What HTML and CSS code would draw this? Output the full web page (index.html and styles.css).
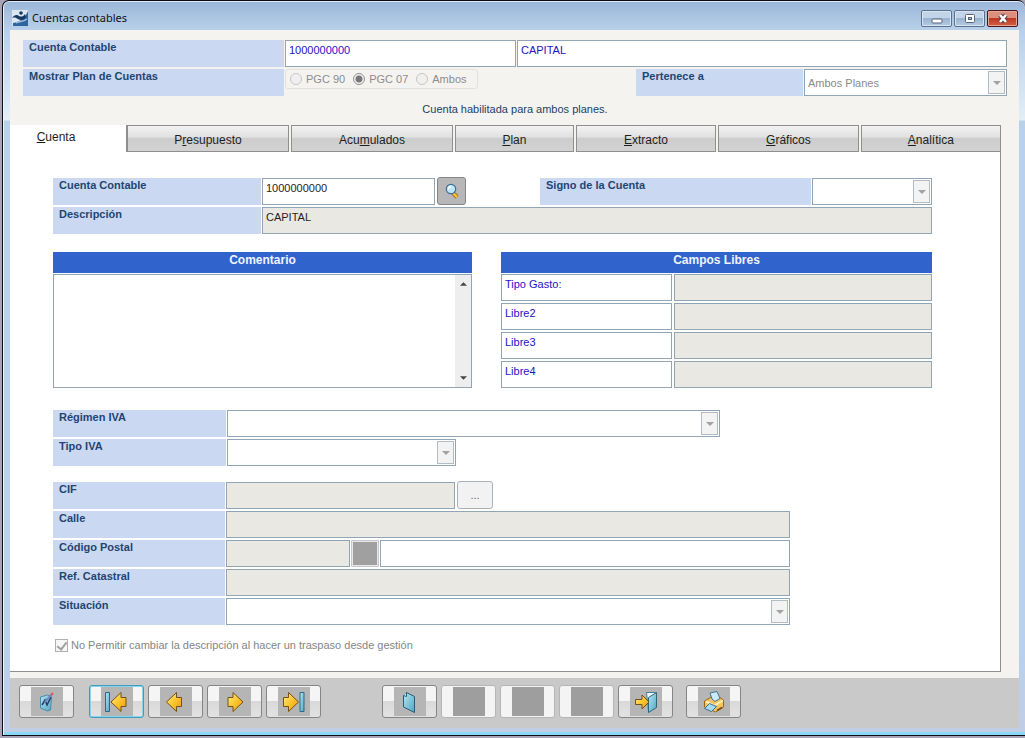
FILE: index.html
```html
<!DOCTYPE html>
<html lang="es">
<head>
<meta charset="utf-8">
<title>Cuentas contables</title>
<link rel="stylesheet" href="styles.css">
</head>
<body>
<svg class="defs" aria-hidden="true">
  <defs>
    <linearGradient id="gold" x1="0" y1="0" x2="1" y2="1">
      <stop offset="0" stop-color="#fff08a"/><stop offset="0.5" stop-color="#fcc52c"/><stop offset="1" stop-color="#e69a12"/>
    </linearGradient>
    <linearGradient id="aqua" x1="0" y1="0" x2="1" y2="1">
      <stop offset="0" stop-color="#b5e6f3"/><stop offset="1" stop-color="#4fa5c4"/>
    </linearGradient>
    <symbol id="drop" viewBox="0 0 8 4"><path d="M0 0h8L4 4z" fill="#a2a2a2"/></symbol>
  </defs>
</svg>
<div class="window">
  <header class="titlebar">
    <svg class="app-icon" viewBox="0 0 16 16"><path d="M0 0h16v16H0z" fill="#dbe6f1"/><path d="M16 1v15H1v-3C8 12 13 8 16 1z" fill="#2f659c"/><path d="M0 8c2-3 5-4 7-2 2 1 4 1 6-2l1 3c-2 3-5 4-8 2C4 8 3 7 0 8z" fill="#15395f"/><circle cx="9" cy="3" r="1.800" fill="#15395f"/><path d="M4 13c4-3 6 0 11-4" fill="none" stroke="#9dc0e2" stroke-width="1.500"/></svg>
    <h1 class="title">Cuentas contables</h1>
    <div class="window-buttons">
      <button class="winbtn" aria-label="Minimizar"><svg viewBox="0 0 12 11"><rect x="1" y="6" width="10" height="4" rx="1" fill="#fff" stroke="#56657c"/></svg></button>
      <button class="winbtn" aria-label="Maximizar"><svg viewBox="0 0 12 11"><rect x="1.500" y="1.500" width="9" height="8" rx="1" fill="#fff" stroke="#56657c"/><rect x="4.500" y="4.500" width="3" height="2" fill="#9db7d4" stroke="#56657c"/></svg></button>
      <button class="winbtn winbtn-close" aria-label="Cerrar"><svg viewBox="0 0 12 11"><path d="M3 2l6 7M9 2L3 9" stroke="#5c3a3e" stroke-width="4.500"/><path d="M3 2l6 7M9 2L3 9" stroke="#fff" stroke-width="2.600"/></svg></button>
    </div>
  </header>

  <main class="client">
    <section class="summary">
      <div class="row">
        <label class="label w-head" for="cta">Cuenta Contable</label>
        <input class="field blue w-code" id="cta" value="1000000000">
        <input class="field blue grow" aria-label="Nombre de la cuenta" value="CAPITAL">
      </div>
      <div class="row">
        <span class="label w-head" id="planlbl">Mostrar Plan de Cuentas</span>
        <div class="radios" role="radiogroup" aria-labelledby="planlbl">
          <label class="radio"><input type="radio" name="plan" disabled>PGC 90</label>
          <label class="radio"><input type="radio" name="plan" checked disabled>PGC 07</label>
          <label class="radio"><input type="radio" name="plan" disabled>Ambos</label>
        </div>
        <label class="label w-belongs push" for="pert">Pertenece a</label>
        <div class="combo w-plans"><select id="pert" disabled><option>Ambos Planes</option></select><span class="arrow"><svg><use href="#drop"/></svg></span></div>
      </div>
      <p class="message">Cuenta habilitada para ambos planes.</p>
    </section>

    <nav class="tabs" role="tablist">
      <button class="tab tab-active" role="tab" aria-selected="true"><span><u>C</u>uenta</span></button>
      <button class="tab t-wide" role="tab"><span>P<u>r</u>esupuesto</span></button>
      <button class="tab t-wide" role="tab"><span>Acu<u>m</u>ulados</span></button>
      <button class="tab t-small" role="tab"><span><u>P</u>lan</span></button>
      <button class="tab t-mid" role="tab"><span><u>E</u>xtracto</span></button>
      <button class="tab t-mid" role="tab"><span><u>G</u>ráficos</span></button>
      <button class="tab t-mid" role="tab"><span><u>A</u>nalítica</span></button>
    </nav>

    <section class="panel">
      <div class="group">
        <div class="row">
          <label class="label w-account" for="cod">Cuenta Contable</label>
          <input class="field w-number" id="cod" value="1000000000">
          <button class="lookup" aria-label="Buscar"><svg viewBox="0 0 16 16"><path d="M9 10l4 4" stroke="#8a5a10" stroke-width="4"/><path d="M9 10l4 4" stroke="#fbc02d" stroke-width="2.500"/><circle cx="7" cy="6" r="4.700" fill="#bfe6f8" stroke="#3f6d96" stroke-width="1.200"/><path d="M4.500 6a2.500 2.500 0 012.500-2.500" fill="none" stroke="#fff" stroke-width="1.300"/></svg></button>
          <label class="label w-sign push" for="signo">Signo de la Cuenta</label>
          <div class="combo w-signbox"><select id="signo" disabled><option></option></select><span class="arrow"><svg><use href="#drop"/></svg></span></div>
        </div>
        <div class="row">
          <label class="label w-account" for="desc">Descripción</label>
          <input class="field shaded grow" id="desc" value="CAPITAL" readonly>
        </div>
      </div>

      <div class="columns">
        <div class="comment">
          <label class="heading" for="com">Comentario</label>
          <div class="memo">
            <textarea id="com"></textarea>
            <div class="scroll"><svg viewBox="0 0 8 4"><path d="M4 0l4 4H0z" fill="#444"/></svg><svg viewBox="0 0 8 4"><path d="M0 0h8L4 4z" fill="#444"/></svg></div>
          </div>
        </div>
        <div class="free">
          <h2 class="heading">Campos Libres</h2>
          <div class="free-rows">
            <div class="row"><input class="field blue w-free" aria-label="Campo 1" value="Tipo Gasto:"><input class="field shaded grow" aria-label="Valor 1" readonly></div>
            <div class="row"><input class="field blue w-free" aria-label="Campo 2" value="Libre2"><input class="field shaded grow" aria-label="Valor 2" readonly></div>
            <div class="row"><input class="field blue w-free" aria-label="Campo 3" value="Libre3"><input class="field shaded grow" aria-label="Valor 3" readonly></div>
            <div class="row"><input class="field blue w-free" aria-label="Campo 4" value="Libre4"><input class="field shaded grow" aria-label="Valor 4" readonly></div>
          </div>
        </div>
      </div>

      <div class="group tax">
        <div class="row">
          <label class="label w-side" for="reg">Régimen IVA</label>
          <div class="combo grow"><select id="reg" disabled><option></option></select><span class="arrow"><svg><use href="#drop"/></svg></span></div>
        </div>
        <div class="row">
          <label class="label w-side" for="tipo">Tipo IVA</label>
          <div class="combo w-cif"><select id="tipo" disabled><option></option></select><span class="arrow"><svg><use href="#drop"/></svg></span></div>
        </div>
      </div>

      <div class="group address">
        <div class="row">
          <label class="label w-address" for="cif">CIF</label>
          <input class="field shaded w-cif" id="cif" readonly>
          <button class="more" disabled>...</button>
        </div>
        <div class="row">
          <label class="label w-address" for="calle">Calle</label>
          <input class="field shaded grow" id="calle" readonly>
        </div>
        <div class="row">
          <label class="label w-address" for="cp">Código Postal</label>
          <input class="field shaded w-postal" id="cp" readonly>
          <button class="blank" disabled aria-label="Buscar código postal"></button>
          <input class="field grow" aria-label="Población">
        </div>
        <div class="row">
          <label class="label w-address" for="ref">Ref. Catastral</label>
          <input class="field shaded grow" id="ref" readonly>
        </div>
        <div class="row">
          <label class="label w-address" for="sit">Situación</label>
          <div class="combo grow"><select id="sit" disabled><option></option></select><span class="arrow"><svg><use href="#drop"/></svg></span></div>
        </div>
      </div>

      <label class="check"><input type="checkbox" checked disabled>No Permitir cambiar la descripción al hacer un traspaso desde gestión</label>
    </section>
  </main>

  <footer class="toolbar">
    <button class="tool" aria-label="Modificar"><span><svg viewBox="0 0 24 24"><path d="M5.500 7l7-2 4 2-1 13-3 1-7-3z" fill="url(#aqua)" stroke="#4b8ba5"/><path d="M7 15l3-5 2 5 4-8" fill="none" stroke="#263c63" stroke-width="1.500"/><path d="M10 12l7-8" stroke="#7189c5" stroke-width="2"/><path d="M16 5l2-2" stroke="#d65d50" stroke-width="2"/></svg></span></button>
    <div class="tools nav-tools">
      <button class="tool tool-focus" aria-label="Primero"><span><svg viewBox="0 0 24 24"><path d="M.5 2.500h4v19h-4z" fill="url(#aqua)" stroke="#286b85"/><path d="M6 12l10-9.500v5h5v9h-5v5z" fill="url(#gold)" stroke="#755019"/></svg></span></button>
      <button class="tool" aria-label="Anterior"><span><svg viewBox="0 0 24 24"><path d="M2.500 12l10-9.500v5h5v9h-5v5z" fill="url(#gold)" stroke="#755019"/></svg></span></button>
      <button class="tool" aria-label="Siguiente"><span><svg viewBox="0 0 24 24"><path d="M20 12L10 2.500v5H5v9h5v5z" fill="url(#gold)" stroke="#755019"/></svg></span></button>
      <button class="tool" aria-label="Último"><span><svg viewBox="0 0 24 24"><path d="M16.500 12l-10-9.500v5h-5v9h5v5z" fill="url(#gold)" stroke="#755019"/><path d="M18 2.500h4v19h-4z" fill="url(#aqua)" stroke="#286b85"/></svg></span></button>
    </div>
    <div class="tools action-tools">
      <button class="tool" aria-label="Nuevo"><span><svg viewBox="0 0 24 24"><path d="M5.500 5.500l3-3 8 4v16l-11-5.500z" fill="url(#aqua)" stroke="#2b5c77"/><path d="M5.500 5.500l3 1v-4" fill="#d8f2fa" stroke="#2b5c77"/></svg></span></button>
      <button class="tool tool-off" disabled aria-label="Opción 1"><span></span></button>
      <button class="tool tool-off" disabled aria-label="Opción 2"><span></span></button>
      <button class="tool tool-off" disabled aria-label="Opción 3"><span></span></button>
      <button class="tool" aria-label="Salir"><span><svg viewBox="0 0 24 24"><path d="M12.500 2.500h9v15l-7 4z" fill="#eef7fa" stroke="#3f7e99"/><path d="M14.500 7.500l8-5v15l-8 5z" fill="url(#aqua)" stroke="#2d657f"/><path d="M1.500 9.500H8V5l7 7-7 7v-4.500H1.500z" fill="url(#gold)" stroke="#755019"/></svg></span></button>
    </div>
    <button class="tool print-tool" aria-label="Imprimir"><span><svg viewBox="0 0 24 24"><path d="M2.500 11l7-4 6-1 6 4v7l-8 5-11-5z" fill="#f5c45c" stroke="#966519"/><path d="M10 9l-2-6 7-1.500 3 7-5 3z" fill="#c8eafa" stroke="#49718d"/><path d="M4 11.500l8 4 9-5" fill="none" stroke="#fff0b4" stroke-width="2"/><path d="M7.500 13.500l7 3-5 5-7-3z" fill="#a7dbf3" stroke="#3d6e8d"/><path d="M15 20.500l5-3" stroke="#7c5010" stroke-width="2"/></svg></span></button>
  </footer>
</div>
</body>
</html>
```
FILE: styles.css
```css
* { box-sizing: border-box; }

body {
  margin: 0;
  min-height: 100vh;
  display: flex;
  background: #a9a3b8;
  font: 11px/14px "Liberation Sans", Arial, sans-serif;
  color: #1e1e1e;
}

button, input, select, textarea { font: inherit; color: inherit; margin: 0; }

.defs { position: absolute; width: 0; height: 0; }

/* Window frame */
.window {
  flex: 1;
  min-width: 0;
  display: flex;
  flex-direction: column;
  margin: 0 0 2px 2px;
  padding: 0 6px 0 7px;
  border: solid #0b0d12;
  border-width: 1px 0 1px 1px;
  border-radius: 7px 7px 0 0;
  box-shadow: inset 0 1px #dfeaf5, inset 1px 0 #eef5fb, inset 0 -3px #8cd6f8;
  background: linear-gradient(#9ab6d8, #b7cfe9 28px, #e3eef8 119px, #bad2e9 120px, #b9d1ea 650px, #c2cde5);
}

.titlebar {
  display: flex;
  align-items: center;
  gap: 4px;
  height: 29px;
  padding: 5px 1px 0 2px;
}

.app-icon { width: 16px; height: 16px; }
.title { margin: 0; font: 11px/16px "Noto Sans", sans-serif; color: #111; flex: 1; }
.window-buttons { display: flex; gap: 2px; }

.winbtn {
  display: grid;
  place-items: center;
  width: 31px;
  height: 17px;
  padding: 0;
  border: 1px solid #5d708c;
  border-radius: 2px;
  box-shadow: inset 0 0 0 1px #d7e4f2;
  background: linear-gradient(#c2d4e8 50%, #9ab3cf 50%, #b5cbe3);
}
.winbtn svg { width: 12px; height: 11px; }
.winbtn-close {
  border-color: #4b1418;
  box-shadow: inset 0 0 0 1px #e7a699;
  background: linear-gradient(#dd8f7e 50%, #bf3825 50%, #d2603f);
}

.client {
  flex: 1;
  display: flex;
  flex-direction: column;
  padding-bottom: 6px;
  background: #f4f3f0;
}

/* Rows and fields */
.row { display: flex; gap: 1px; min-height: 27px; }
.group, .free-rows, .summary { display: flex; flex-direction: column; gap: 2px; }
.grow { flex: 1; min-width: 0; }
.push { margin-left: auto; }

.label {
  flex: none;
  padding: 0 6px;
  background: #cbd8f2;
  color: #1f4572;
  font-weight: bold;
}

.field {
  height: 27px;
  padding: 0 3px 7px;
  border: 1px solid #92a5b5;
  border-radius: 0;
  background: #fff;
}
.shaded { background: #e9e8e3; }
.blue { color: #2412c4; }

.combo {
  display: flex;
  height: 27px;
  padding: 1px;
  border: 1px solid #92a5b5;
  background: #fff;
}
.combo select {
  flex: 1;
  min-width: 0;
  padding: 0 2px;
  border: 0;
  appearance: none;
  background: none;
  color: #8a8a8a;
  opacity: 1;
}
.arrow {
  display: grid;
  place-items: center;
  width: 17px;
  border: 1px solid #b3bcc4;
  background: #f3f3f3;
}
.arrow svg { width: 8px; height: 4px; }

.w-head { width: 261px; }
.w-code { width: 231px; }
.w-belongs { width: 167px; }
.w-plans { width: 203px; }
.w-account { width: 208px; }
.w-number { width: 173px; }
.w-sign { width: 271px; }
.w-signbox { width: 120px; }
.w-free { width: 171px; }
.w-side { width: 173px; }
.w-address { width: 172px; }
.w-cif { width: 229px; }
.w-postal { width: 124px; }

.summary { padding: 10px 12px 0 13px; }

.radios {
  display: flex;
  align-self: flex-start;
  gap: 8px;
  height: 20px;
  padding: 0 10px 0 4px;
  border: 1px solid #e3e1dc;
  border-radius: 3px;
}
.radio { display: flex; align-items: center; gap: 4px; color: #8c8c8c; }
.radio input {
  appearance: none;
  width: 12px;
  height: 12px;
  border: 1px solid #c6c6c6;
  border-radius: 50%;
  background: #f0f0f0;
}
.radio input:checked {
  border-color: #929292;
  background: radial-gradient(circle, #777 0 3px, #f0f0f0 4px);
}

.message { margin: 4px 0 9px; text-align: center; color: #1d3f63; }

/* Tabs */
.tabs { display: flex; gap: 2px; margin-right: 18px; height: 27px; }
.tab {
  padding: 2px 0 0;
  border: 1px solid #8f8f8f;
  background: linear-gradient(#f3f3f3, #e0e0e0 45%, #cdcdcd 50%, #d2d2d2);
  font-size: 12px;
}
.tab-active {
  width: 117px;
  margin-right: -2px;
  padding: 0 24px 4px 0;
  border-width: 0 1px 0 0;
  background: #fff;
}
.t-wide { flex: 163; }
.t-small { flex: 119; }
.t-mid { flex: 141; }

/* Tab page */
.panel {
  flex: 1;
  margin-right: 18px;
  padding: 26px 68px 18px 43px;
  border: solid #8f8f8f;
  border-width: 0 1px 1px 0;
  background: #fff;
}

.lookup {
  display: grid;
  place-items: center;
  width: 29px;
  height: 28px;
  margin: -1px 0 0 1px;
  padding: 0;
  border: 1px solid #858585;
  border-radius: 3px;
  background: #b7b7b7;
}
.lookup svg { width: 16px; height: 16px; }

.columns { display: grid; grid-template-columns: 419fr 431fr; gap: 29px; margin-top: 18px; }
.comment, .free { display: flex; flex-direction: column; gap: 1px; min-width: 0; }
.free .row { gap: 2px; }
.heading {
  height: 21px;
  margin: 0;
  padding-top: 1px;
  background: #3063cb;
  color: #eef4ff;
  font: bold 12px/14px "Liberation Sans", Arial, sans-serif;
  text-align: center;
}
.memo { flex: 1; display: flex; border: 1px solid #92a5b5; }
.memo textarea { flex: 1; min-width: 0; border: 0; resize: none; }
.scroll {
  display: flex;
  flex-direction: column;
  justify-content: space-between;
  align-items: center;
  width: 16px;
  padding: 7px 0;
  background: #eeeeee;
}
.scroll svg { width: 7px; height: 4px; }

.tax { margin: 22px 212px 0 0; }
.address { margin: 16px 142px 0 0; }

.more, .blank { padding: 0; border: 1px solid #aab1b8; border-radius: 3px; background: #f2f2f2; }
.more { width: 36px; height: 28px; margin: -1px 0 0 1px; color: #666; }
.blank {
  width: 28px;
  height: 27px;
  border-color: #c3c9cd;
  border-radius: 1px;
  box-shadow: inset 0 0 0 1px #e8e8e8;
  background: #a0a0a0;
}

.check { display: flex; align-items: center; gap: 3px; margin: 13px 0 0 2px; color: #858585; }
.check input {
  appearance: none;
  display: grid;
  place-items: center;
  width: 13px;
  height: 13px;
  border: 1px solid #b0b0b0;
  background: #f6f6f6;
}
.check input::before {
  content: "";
  width: 4px;
  height: 8px;
  margin-bottom: 2px;
  border: solid #a0a0a0;
  border-width: 0 2px 2px 0;
  transform: rotate(38deg);
}

/* Bottom toolbar */
.toolbar {
  display: flex;
  padding: 7px 9px 10px;
  margin-bottom: 7px;
  background: #c9c9c9;
}
.tools { display: flex; gap: 4px; }
.nav-tools { margin-left: 15px; }
.action-tools { margin-left: 61px; }
.print-tool { margin-left: 13px; }

.tool {
  display: flex;
  justify-content: center;
  width: 55px;
  height: 33px;
  padding: 1px 0;
  border: 1px solid #858585;
  border-radius: 3px;
  background: linear-gradient(#f5f5f5 50%, #d9d9d9 50%, #e2e2e2);
}
.tool span { display: grid; place-items: center; width: 32px; height: 29px; background: #b5b5b5; }
.tool svg { width: 24px; height: 24px; }
.tool-focus { border-color: #3c9dc0; box-shadow: inset 0 0 0 1px #8bd2ea; }
.tool-off { border-color: #b5b5b5; background: #f4f4f4; }
.tool-off span { background: #9e9e9e; }
```
